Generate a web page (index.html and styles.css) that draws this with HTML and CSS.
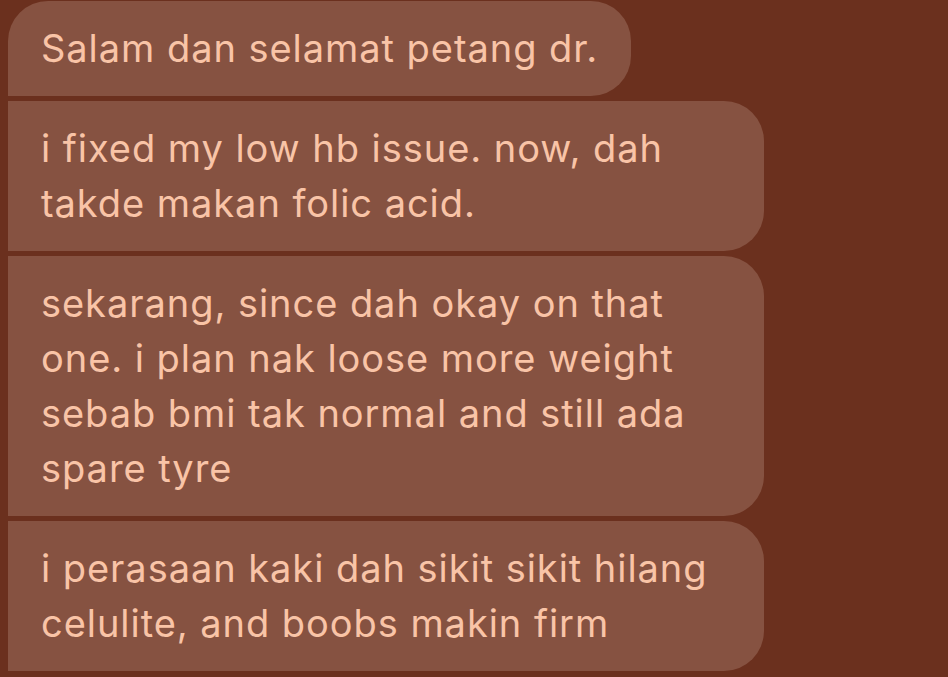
FILE: index.html
```html
<!DOCTYPE html>
<html lang="ms">
<head>
<meta charset="utf-8">
<title>Chat</title>
<link rel="stylesheet" href="styles.css">
</head>
<body>
<div class="thread">
  <div class="bubble first"><span class="t">Salam dan selamat petang dr.</span></div>
  <div class="bubble wide"><span class="t">i fixed my low hb issue. now, dah<br>takde makan folic acid.</span></div>
  <div class="bubble wide"><span class="t">sekarang, since dah okay on that<br>one. i plan nak loose more weight<br>sebab bmi tak normal and still ada<br>spare tyre</span></div>
  <div class="bubble wide last"><span class="t">i perasaan kaki dah sikit sikit hilang<br>celulite, and boobs makin firm</span></div>
</div>
</body>
</html>
```
FILE: styles.css
```css
html, body {
  margin: 0;
  padding: 0;
  background: #6b301e;
}
body {
  width: 948px;
  height: 677px;
  overflow: hidden;
  font-family: Inter, "Noto Sans", sans-serif;
}
.thread {
  display: flex;
  flex-direction: column;
  align-items: flex-start;
  gap: 5px;
  padding: 1px 0 0 8px;
}
.bubble {
  background: #865241;
  color: #f9c4a7;
  font-size: 38px;
  letter-spacing: 0.95px;
  line-height: 55px;
  padding: 20px 33px 20px 33px;
  border-radius: 0 40px 40px 0;
  box-sizing: border-box;
}
.bubble.first {
  border-top-left-radius: 40px;
  height: 95px;
}
.bubble.wide {
  width: 756px;
}
.t {
  display: inline-block;
  white-space: nowrap;
}
```
